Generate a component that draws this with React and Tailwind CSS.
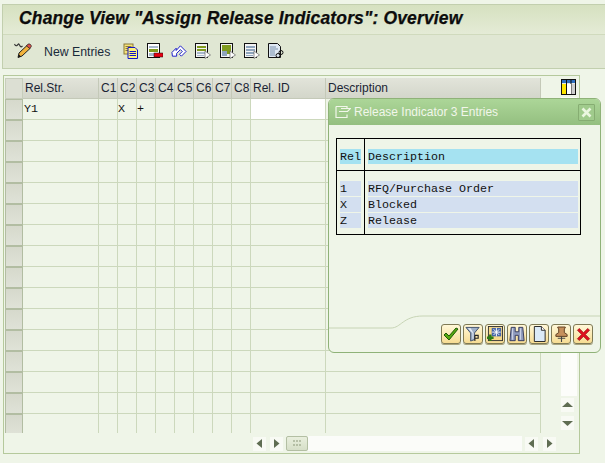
const cols = [
  { w: 76, h: "Rel.Str." },
  { w: 19, h: "C1" },
  { w: 19, h: "C2" },
  { w: 19, h: "C3" },
  { w: 19, h: "C4" },
  { w: 19, h: "C5" },
  { w: 19, h: "C6" },
  { w: 19, h: "C7" },
  { w: 19, h: "C8" },
  { w: 75, h: "Rel. ID" },
  { w: 215, h: "Description" },
];
const rowCount = 16;

const Pencil = () => (
  <svg width="18" height="17" viewBox="0 0 18 17">
    <path d="M0.500 2c1 2.500 2 2 3 1s1-2 2 0 1.500 2.500 3 1" fill="none" stroke="#333" strokeWidth="1.100" />
    <path d="M4 15.500l1-4.500 8-7.500 3 3-8 7.500z" fill="#f2b33d" stroke="#222" strokeWidth="1" />
    <path d="M12.500 4l1.500-2h2l1.500 2-1.500 2.500z" fill="#e0524a" stroke="#222" strokeWidth="0.700" />
    <path d="M4 15.500l1-3 2 2z" fill="#111" />
  </svg>
);
const Copy = () => (
  <svg width="16" height="16" viewBox="0 0 16 16">
    <rect x="1" y="1" width="9" height="10" fill="#f5e27a" stroke="#8a7a3a" />
    <path d="M2.500 3.500h6M2.500 5.500h6M2.500 7.500h6" stroke="#8a7a3a" />
    <path d="M5 4.500h7l2.500 2.500v8.500H5z" fill="#fff27a" stroke="#1414c8" />
    <path d="M6.500 8.500h6.500M6.500 10.500h6.500M6.500 12.500h6.500" stroke="#1414c8" />
  </svg>
);
const DelRow = () => (
  <svg width="16" height="16" viewBox="0 0 16 16">
    <rect x="0.500" y="0.500" width="12" height="14" fill="#fff" stroke="#111" />
    <rect x="2" y="3" width="9" height="2" fill="#a8b8cc" />
    <rect x="2" y="6" width="9" height="3" fill="#7f9a1e" />
    <rect x="2" y="10" width="9" height="3" fill="#a8b8cc" />
    <rect x="7" y="10" width="9" height="4" fill="#e60012" stroke="#111" strokeWidth="0.500" />
  </svg>
);
const Undo = () => (
  <svg width="16" height="14" viewBox="0 0 17 14">
    <path d="M1 8.500L5.500 4v2.500L10 1.500l6 6-5 5-2-2 3-3-2-2-4 4v3H1.500z" fill="#fff" stroke="#1414c8" strokeWidth="1" />
  </svg>
);
const Doc = ({ a, b, c, big }) => (
  <svg width="16" height="16" viewBox="0 0 16 16">
    <rect x="0.500" y="0.500" width="12" height="14" fill="#f4f4f4" stroke="#111" />
    {big ? (
      <>
        <rect x="2" y="2" width="9" height="6" fill={a} />
        <rect x="2" y="8" width="5" height="5" fill={b} />
        <rect x="7" y="8" width="4" height="3" fill={a} />
      </>
    ) : (
      <>
        <rect x="2" y="3" width="9" height="2" fill={a} />
        <rect x="2" y="6" width="9" height="2" fill={b} />
        <rect x="2" y="9" width="9" height="2" fill={c} />
        <rect x="2" y="12" width="7" height="1" fill={c} />
      </>
    )}
    <path d="M10 8l5.500 4-5.500 3.500z" fill="#fff" stroke="#666" strokeWidth="0.700" />
  </svg>
);
const DocLink = () => (
  <svg width="16" height="16" viewBox="0 0 16 16">
    <path d="M0.500 0.500h9l3 3v11h-12z" fill="#dfe9f3" stroke="#111" />
    <path d="M2 4h6M2 6h8M2 8h5M2 10h5M2 12h5" stroke="#7d93ae" />
    <ellipse cx="10" cy="12.500" rx="2" ry="2" fill="none" stroke="#111" />
    <ellipse cx="13" cy="9.500" rx="2" ry="2" fill="none" stroke="#111" />
  </svg>
);
const Columns = () => (
  <svg width="15" height="16" viewBox="0 0 15 16">
    <rect x="0.500" y="0.500" width="14" height="15" fill="#e6e6e6" stroke="#111" />
    <rect x="1" y="1" width="13" height="3" fill="#2f6fc0" />
    <path d="M5.500 1v14M10 1v14" stroke="#111" />
    <rect x="1" y="5" width="4" height="10" fill="#ffe600" />
    <rect x="6" y="5" width="4" height="10" fill="#fff" />
    <rect x="11" y="5" width="3" height="10" fill="#cfcfcf" />
  </svg>
);

const Tri = ({ d }) => {
  const p = { l: "M9 2v9L3.500 6.500z", r: "M4 2v9l5.500-4.500z", u: "M1 8h11L6.500 3z", dn: "M1 4h11L6.500 9z" }[d];
  return (
    <svg width="13" height="13" viewBox="0 0 13 13">
      <path d={p} fill="#5f6d52" />
    </svg>
  );
};
const ArrowBtn = ({ d }) => (
  <div className="w-[13px] h-[14px] bg-[#f8faf4] flex items-center justify-center">
    <Tri d={d} />
  </div>
);
const Grip = () => (
  <svg width="10" height="7" viewBox="0 0 10 7">
    <path d="M1 1h2M4 1h2M7 1h2M1 5h2M4 5h2M7 5h2" stroke="#8b9779" strokeWidth="1" />
  </svg>
);

const Check = () => (
  <svg width="16" height="16" viewBox="0 0 16 16">
    <path d="M1 9l2-2 3 3 7-8 2 1-9 11z" fill="#56a80f" stroke="#1c5a06" strokeWidth="1" />
  </svg>
);
const Funnel = () => (
  <svg width="16" height="16" viewBox="0 0 17 17">
    <path d="M1 1.500h14l-5 6v7l-4 1.500V7.500z" fill="#9fb0c8" stroke="#3f4f6a" />
    <path d="M3 2.500h3l3 5v6H8V7.500z" fill="#e6edf6" />
    <path d="M10.500 10v6M10.500 10h3.500v3h-3.500" fill="none" stroke="#222" strokeWidth="1.200" />
  </svg>
);
const AddSel = () => (
  <svg width="16" height="16" viewBox="0 0 17 17">
    <rect x="1.500" y="0.500" width="15" height="15" fill="#f6d98a" stroke="#333" />
    <rect x="5" y="2" width="10" height="9" fill="#4766a8" />
    <path d="M10 2v9M5.500 6.500h9M7 3.500l6 6M13 3.500l-6 6" stroke="#fff" strokeWidth="1" />
    <path d="M3.500 9v7M0 12.500h7" stroke="#2d7a14" strokeWidth="2.600" />
  </svg>
);
const Binoc = () => (
  <svg width="16" height="16" viewBox="0 0 18 17">
    <path d="M2.500 1h4.500v5h4V1h4.500l1.500 15h-6.500V10h-3.500v6H1z" fill="#8f9bbd" stroke="#2a2f55" strokeWidth="1" />
    <path d="M4 2v13M13 2v13" stroke="#c9d0e4" strokeWidth="1.200" />
  </svg>
);
const Page = () => (
  <svg width="15" height="16" viewBox="0 0 16 17">
    <path d="M2.500 0.500h7.500l4 4v12H2.500z" fill="#dbeaf7" stroke="#222" />
    <path d="M10 0.500v4h4" fill="#fff" stroke="#222" />
  </svg>
);
const Pin = () => (
  <svg width="15" height="17" viewBox="0 0 16 18">
    <path d="M4 1h8v1l-1 1v4l3 2v2H2V9l3-2V3L4 2z" fill="#c6905c" stroke="#5a3a1e" />
    <path d="M8 11v6M4 13h8" stroke="#444" strokeWidth="1.200" />
  </svg>
);
const XIcon = () => (
  <svg width="15" height="15" viewBox="0 0 16 16">
    <path d="M1.500 3.500l2-2L8 6l4.500-4.500 2 2L10 8l4.500 4.500-2 2L8 10l-4.500 4.500-2-2L6 8z" fill="#e0111e" stroke="#8d0a12" strokeWidth="0.700" />
  </svg>
);
const PopupGlyph = () => (
  <svg width="16" height="14" viewBox="0 0 16 14">
    <path d="M6 3.500h9.500l-3 3h-6.500M1 1.500h11v2M1 1.500v11h11v-3M4 6.500h8" fill="none" stroke="#f1f6ea" strokeWidth="1.200" />
  </svg>
);
const CloseX = () => (
  <svg width="11" height="11" viewBox="0 0 11 11">
    <path d="M1.500 1.500l8 8M9.500 1.500l-8 8" stroke="#eaf6df" strokeWidth="2.600" />
  </svg>
);
const YBtn = ({ children }) => (
  <div className="w-[20px] h-[20px] rounded-[3px] border border-[#7f7a55] bg-gradient-to-b from-[#fff8d8] to-[#f6dc92] flex items-center justify-center shadow-[0_1px_0_#a8a480]">
    {children}
  </div>
);

const mono = { fontFamily: '"Liberation Mono", monospace' };

const Cell = ({ w, children, white, tight }) => (
  <div
    className={`h-[21px] shrink-0 border-b border-r border-[#ccd8bc] text-[11.67px] leading-[21px] text-[#111] ${tight ? "" : "pl-px"} ${white ? "bg-white" : ""}`}
    style={{ width: w, ...mono }}
  >
    {children}
  </div>
);

const Row = ({ first, idx }) => (
  <div className={`flex ${idx === rowCount - 1 ? "h-[19px] overflow-hidden" : ""}`}>
    <div className="w-[18px] h-[21px] shrink-0 border border-[#b2bda2] bg-gradient-to-b from-[#d6d9cc] to-[#dfe2d7]" />
    {cols.map((c, i) => (
      <Cell key={c.h} w={c.w} white={first && i === 9} tight={i > 0}>
        {first && i === 0 ? "Y1" : first && i === 2 ? "X" : first && i === 3 ? "+" : ""}
      </Cell>
    ))}
  </div>
);

export default function App() {
  return (
    <div
      className="w-[605px] h-[463px] bg-[#eff5e8] relative overflow-hidden pt-[4px] pl-[2px]"
      style={{ fontFamily: '"Liberation Sans", Arial, sans-serif' }}
    >
      <div className="border-t border-l border-b border-[#c2cfae] bg-[#e0e7d3] h-[65px]">
        <div className="h-[30px] pl-[16px] pb-[2px] flex items-center bg-gradient-to-b from-[#d6e1c0] to-[#e4ebd6] border-b border-[#d0dabd]">
          <span className="font-bold italic text-[17.500px] tracking-[0.15px] text-[#0c0c0c] leading-none [-webkit-text-stroke:0.25px]">
            Change View "Assign Release Indicators": Overview
          </span>
        </div>
        <div className="flex items-center h-[33px] pl-[11px] pb-[2px]">
          <Pencil />
          <span className="ml-[12px] mt-[3px] text-[12.300px] text-[#1a2a3a] w-[79px] leading-none">New Entries</span>
          <div className="flex items-center gap-[8px]">
            <Copy />
            <DelRow />
            <Undo />
            <Doc a="#7f9a1e" b="#7f9a1e" c="#a8b8cc" />
            <div className="ml-px"><Doc big a="#7f9a1e" b="#8fa5bd" /></div>
            <Doc a="#8fa5bd" b="#8fa5bd" c="#8fa5bd" />
            <DocLink />
          </div>
        </div>
      </div>

      <div className="mt-[6px] ml-px w-[577px] h-[379px] border border-[#b5c99c] pl-px pt-[2px] relative flex flex-col">
        <div className="flex">
          <div className="flex flex-col">
            <div className="flex h-[21px]">
              <div className="w-[18px] shrink-0 border border-[#c7cdbb] bg-[#dcdfd3]" />
              {cols.map((c) => (
                <div
                  key={c.h}
                  className="shrink-0 bg-gradient-to-b from-[#e2e4da] to-[#d3d6ca] border-r border-b border-[#c4c9b8] text-[12px] leading-[20px] pl-[2px] text-[#1a2433] overflow-hidden"
                  style={{ width: c.w }}
                >
                  {c.h}
                </div>
              ))}
            </div>
            {Array.from({ length: rowCount }).map((_, i) => (
              <Row key={i} first={i === 0} idx={i} />
            ))}
          </div>
          <div className="w-[38px] flex flex-col pl-[20px] pt-px">
            <Columns />
            <div className="w-[16px] flex-1 bg-white/80 mt-[2px]" />
            <div className="flex flex-col gap-[4px] pt-[2px] pb-[3px]">
              <ArrowBtn d="u" />
              <ArrowBtn d="dn" />
            </div>
          </div>
        </div>
        <div className="flex items-center h-[15px] mt-[3px] pl-[248px]">
          <ArrowBtn d="l" />
          <div className="w-[4px]" />
          <ArrowBtn d="r" />
          <div className="w-[3px]" />
          <div className="w-[22px] h-[15px] rounded-[2px] border border-[#b3bfa3] bg-gradient-to-b from-[#e9efdd] to-[#d6dfc8] flex items-center justify-center">
            <Grip />
          </div>
          <div className="w-[214px] h-[15px] bg-[#fbfcf9]" />
          <div className="w-[3px]" />
          <ArrowBtn d="l" />
          <div className="w-[5px]" />
          <ArrowBtn d="r" />
        </div>
      </div>

      <div className="absolute left-[328px] top-[98px] w-[273px] h-[255px] rounded-[6px] border border-[#8fb278] bg-[#eff5e8] overflow-hidden flex flex-col">
        <div className="h-[26px] shrink-0 bg-gradient-to-b from-[#acd698] to-[#94bf80] flex items-center pl-[6px] pr-[5px]">
          <PopupGlyph />
          <span className="ml-[3px] text-[12px] text-[#f1f6ea] flex-1 leading-none">Release Indicator 3 Entries</span>
          <div className="w-[17px] h-[17px] border border-[#86ad72] rounded-[1px] bg-[#a0cb8c] flex items-center justify-center">
            <CloseX />
          </div>
        </div>
        <div
          className="mt-[13px] ml-[7px] w-[245px] h-[97px] border border-black flex flex-col text-[11.67px] text-[#111]"
          style={mono}
        >
          <div className="flex h-[32px] shrink-0 border-b border-black">
            <div className="w-[28px] border-r border-black pl-[3px] pr-[3px] pt-[10px]">
              <div className="bg-[#a5e2f1] h-[15px] leading-[17px]">Rel</div>
            </div>
            <div className="flex-1 pl-[3px] pr-[2px] pt-[10px]">
              <div className="bg-[#a5e2f1] h-[15px] leading-[17px] w-[210px]">Description</div>
            </div>
          </div>
          <div className="flex flex-1">
            <div className="w-[28px] border-r border-black pl-[3px] pr-[3px] pt-[10px] flex flex-col gap-px">
              {["1", "X", "Z"].map((t) => (
                <div key={t} className="bg-[#d3dff0] h-[15px] leading-[17px]">{t}</div>
              ))}
            </div>
            <div className="flex-1 pl-[3px] pr-[2px] pt-[10px] flex flex-col gap-px">
              {["RFQ/Purchase Order", "Blocked", "Release"].map((t) => (
                <div key={t} className="bg-[#d3dff0] h-[15px] leading-[17px] w-[210px]">{t}</div>
              ))}
            </div>
          </div>
        </div>
        <svg className="absolute left-0 top-[216px]" width="272" height="14" viewBox="0 0 272 14">
          <path d="M0 13H62C72 13 74 1 94 1H272" fill="none" stroke="#c7d4b5" />
        </svg>
        <div className="absolute left-[112px] top-[225px] flex gap-[2px]">
          <YBtn><Check /></YBtn>
          <YBtn><Funnel /></YBtn>
          <YBtn><AddSel /></YBtn>
          <YBtn><Binoc /></YBtn>
          <YBtn><Page /></YBtn>
          <YBtn><Pin /></YBtn>
          <YBtn><XIcon /></YBtn>
        </div>
      </div>
    </div>
  );
}
